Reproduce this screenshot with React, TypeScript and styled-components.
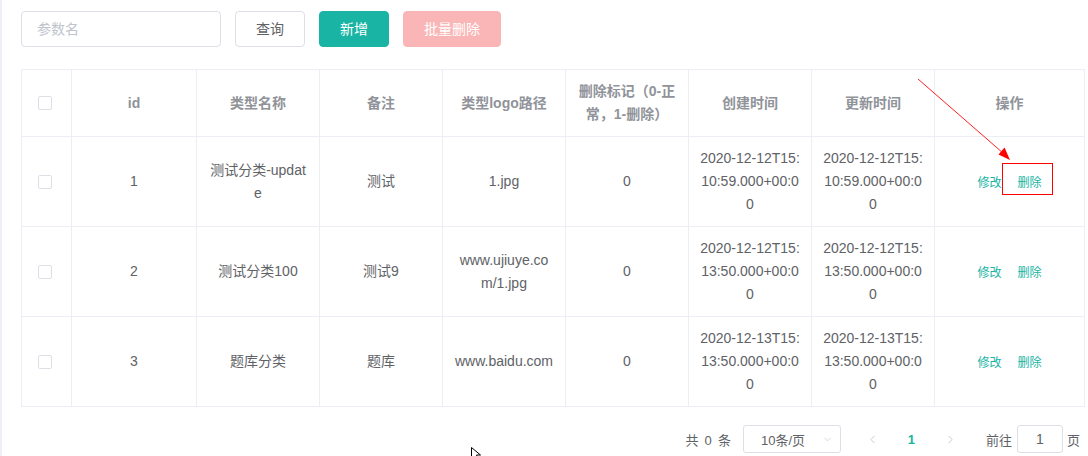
import React from 'react';
import styled, { createGlobalStyle } from 'styled-components';
import { ChevronLeft, ChevronRight, ChevronDown } from 'lucide-react';

const TEAL = '#19b4a3';
const BORDER = '#ebeef5';

const GlobalStyle = createGlobalStyle`
  html, body { margin: 0; padding: 0; background: #fff; }
  body {
    font-family: "Liberation Sans", Arial, "Noto Sans CJK SC", sans-serif;
    font-size: 14px;
    color: #606266;
  }
  * { box-sizing: border-box; }
`;

const Frame = styled.div`
  position: relative;
  width: 1088px;
  height: 456px;
  overflow: hidden;
`;

const Page = styled.div`
  height: 100%;
  border-left: 2px solid #eef0f6;
  padding: 11px 3px 0 19px;
`;

const Toolbar = styled.div`
  display: flex;
  align-items: center;
  gap: 14px;
  height: 36px;
  margin-bottom: 22px;
`;

const SearchInput = styled.input`
  width: 200px;
  height: 36px;
  border: 1px solid #dcdfe6;
  border-radius: 4px;
  padding: 0 15px;
  font-family: inherit;
  font-size: 14px;
  color: #606266;
  outline: none;
  &::placeholder { color: #c0c4cc; }
`;

type Variant = 'plain' | 'primary' | 'dangerDisabled';

const Button = styled.button<{ $variant: Variant }>`
  display: inline-flex;
  align-items: center;
  justify-content: center;
  height: 36px;
  padding: 0 20px;
  border-radius: 4px;
  font-family: inherit;
  font-size: 14px;
  line-height: 1;
  border: 1px solid
    ${(p) => (p.$variant === 'primary' ? TEAL : p.$variant === 'dangerDisabled' ? '#fab6b6' : '#dcdfe6')};
  background: ${(p) => (p.$variant === 'primary' ? TEAL : p.$variant === 'dangerDisabled' ? '#fab6b6' : '#fff')};
  color: ${(p) => (p.$variant === 'plain' ? '#606266' : '#fff')};
  cursor: ${(p) => (p.$variant === 'dangerDisabled' ? 'not-allowed' : 'pointer')};
`;

const Table = styled.div`
  width: 1064px;
  border-top: 1px solid ${BORDER};
  border-left: 1px solid ${BORDER};
`;

const Row = styled.div`
  display: grid;
  grid-template-columns: 50px 125px repeat(6, 123px) 150px;
`;

const Cell = styled.div<{ $head?: boolean; $select?: boolean }>`
  display: flex;
  align-items: center;
  justify-content: ${(p) => (p.$select ? 'flex-start' : 'center')};
  text-align: center;
  padding: ${(p) => (p.$select ? '10px 0 10px 16px' : '10px 11px')};
  line-height: 23px;
  border-right: 1px solid ${BORDER};
  border-bottom: 1px solid ${BORDER};
  word-break: break-all;
  font-size: 14px;
  color: ${(p) => (p.$head ? '#909399' : '#606266')};
  font-weight: ${(p) => (p.$head ? 700 : 400)};
`;

const CellText = styled.div`
  width: 100%;
`;

const Checkbox = styled.span`
  display: inline-block;
  width: 14px;
  height: 14px;
  border: 1px solid #dcdfe6;
  border-radius: 2px;
  background: #fff;
`;

const Actions = styled.div`
  display: flex;
  gap: 16px;
  align-items: center;
`;

const TextButton = styled.button`
  border: none;
  background: none;
  padding: 0;
  font-family: inherit;
  font-size: 12px;
  color: ${TEAL};
  cursor: pointer;
`;

const Pager = styled.div`
  display: flex;
  justify-content: flex-end;
  align-items: center;
  height: 28px;
  margin-top: 18px;
  padding-right: 5px;
  font-size: 13px;
  color: #606266;
`;

const Total = styled.span`
  margin-right: 12px;
  word-spacing: 2.5px;
`;

const SizeSelect = styled.div`
  position: relative;
  display: flex;
  align-items: center;
  width: 98px;
  height: 28px;
  border: 1px solid #dcdfe6;
  border-radius: 3px;
  padding-left: 17px;
  margin-right: 12px;
  color: #606266;
  svg {
    position: absolute;
    right: 7px;
    top: 8px;
  }
`;

const PageBtn = styled.button<{ $active?: boolean }>`
  display: flex;
  align-items: center;
  justify-content: center;
  width: 36px;
  height: 28px;
  margin: 0 1.5px;
  border: none;
  background: #fff;
  padding: 0;
  font-family: inherit;
  font-size: 13px;
  font-weight: 700;
  color: ${(p) => (p.$active ? TEAL : '#c0c4cc')};
`;

const Jumper = styled.div`
  display: flex;
  align-items: center;
  margin-left: 16px;
`;

const JumpInput = styled.div`
  display: flex;
  align-items: center;
  justify-content: center;
  width: 46px;
  height: 28px;
  margin: 0 4px 0 5px;
  border: 1px solid #dcdfe6;
  border-radius: 3px;
  font-size: 14px;
  color: #606266;
`;

const Overlay = styled.svg`
  position: absolute;
  left: 0;
  top: 0;
  pointer-events: none;
`;

const headers = ['id', '类型名称', '备注', '类型logo路径', '删除标记（0-正常，1-删除）', '创建时间', '更新时间', '操作'];

const rows = [
  ['1', '测试分类-update', '测试', '1.jpg', '0', '2020-12-12T15:10:59.000+00:00', '2020-12-12T15:10:59.000+00:00'],
  ['2', '测试分类100', '测试9', 'www.ujiuye.com/1.jpg', '0', '2020-12-12T15:13:50.000+00:00', '2020-12-12T15:13:50.000+00:00'],
  ['3', '题库分类', '题库', 'www.baidu.com', '0', '2020-12-13T15:13:50.000+00:00', '2020-12-13T15:13:50.000+00:00'],
];

export default function App() {
  return (
    <Frame>
      <GlobalStyle />
      <Page>
        <Toolbar>
          <SearchInput placeholder="参数名" />
          <Button $variant="plain">查询</Button>
          <Button $variant="primary">新增</Button>
          <Button $variant="dangerDisabled">批量删除</Button>
        </Toolbar>

        <Table>
          <Row>
            <Cell $head $select>
              <Checkbox />
            </Cell>
            {headers.map((h) => (
              <Cell $head key={h}>
                <CellText>{h}</CellText>
              </Cell>
            ))}
          </Row>
          {rows.map((r) => (
            <Row key={r[0]}>
              <Cell $select>
                <Checkbox />
              </Cell>
              {r.map((v, i) => (
                <Cell key={i}>
                  <CellText>{v}</CellText>
                </Cell>
              ))}
              <Cell>
                <Actions>
                  <TextButton>修改</TextButton>
                  <TextButton>删除</TextButton>
                </Actions>
              </Cell>
            </Row>
          ))}
        </Table>

        <Pager>
          <Total>共 0 条</Total>
          <SizeSelect>
            10条/页
            <ChevronDown size={11} color="#c0c4cc" strokeWidth={1.5} />
          </SizeSelect>
          <PageBtn>
            <ChevronLeft size={13} strokeWidth={1.6} />
          </PageBtn>
          <PageBtn $active>1</PageBtn>
          <PageBtn>
            <ChevronRight size={13} strokeWidth={1.6} />
          </PageBtn>
          <Jumper>
            <span>前往</span>
            <JumpInput>1</JumpInput>
            <span>页</span>
          </Jumper>
        </Pager>
      </Page>

      <Overlay width="1088" height="456" viewBox="0 0 1088 456">
        <line x1="918" y1="79" x2="1003" y2="153" stroke="#ff2020" strokeWidth="1" />
        <polygon points="1010,160 998.5,154.5 1004.5,147.5" fill="#ff0000" />
        <rect x="1002.5" y="163.5" width="50" height="31" fill="none" stroke="#ff0000" strokeWidth="1" />
        <path
          d="M471.5 447.5 L471.5 459 L474.5 456 L477 461.5 L479 460.5 L476.5 455 L480.5 455 Z"
          fill="#fff"
          stroke="#000"
          strokeWidth="1"
        />
      </Overlay>
    </Frame>
  );
}
